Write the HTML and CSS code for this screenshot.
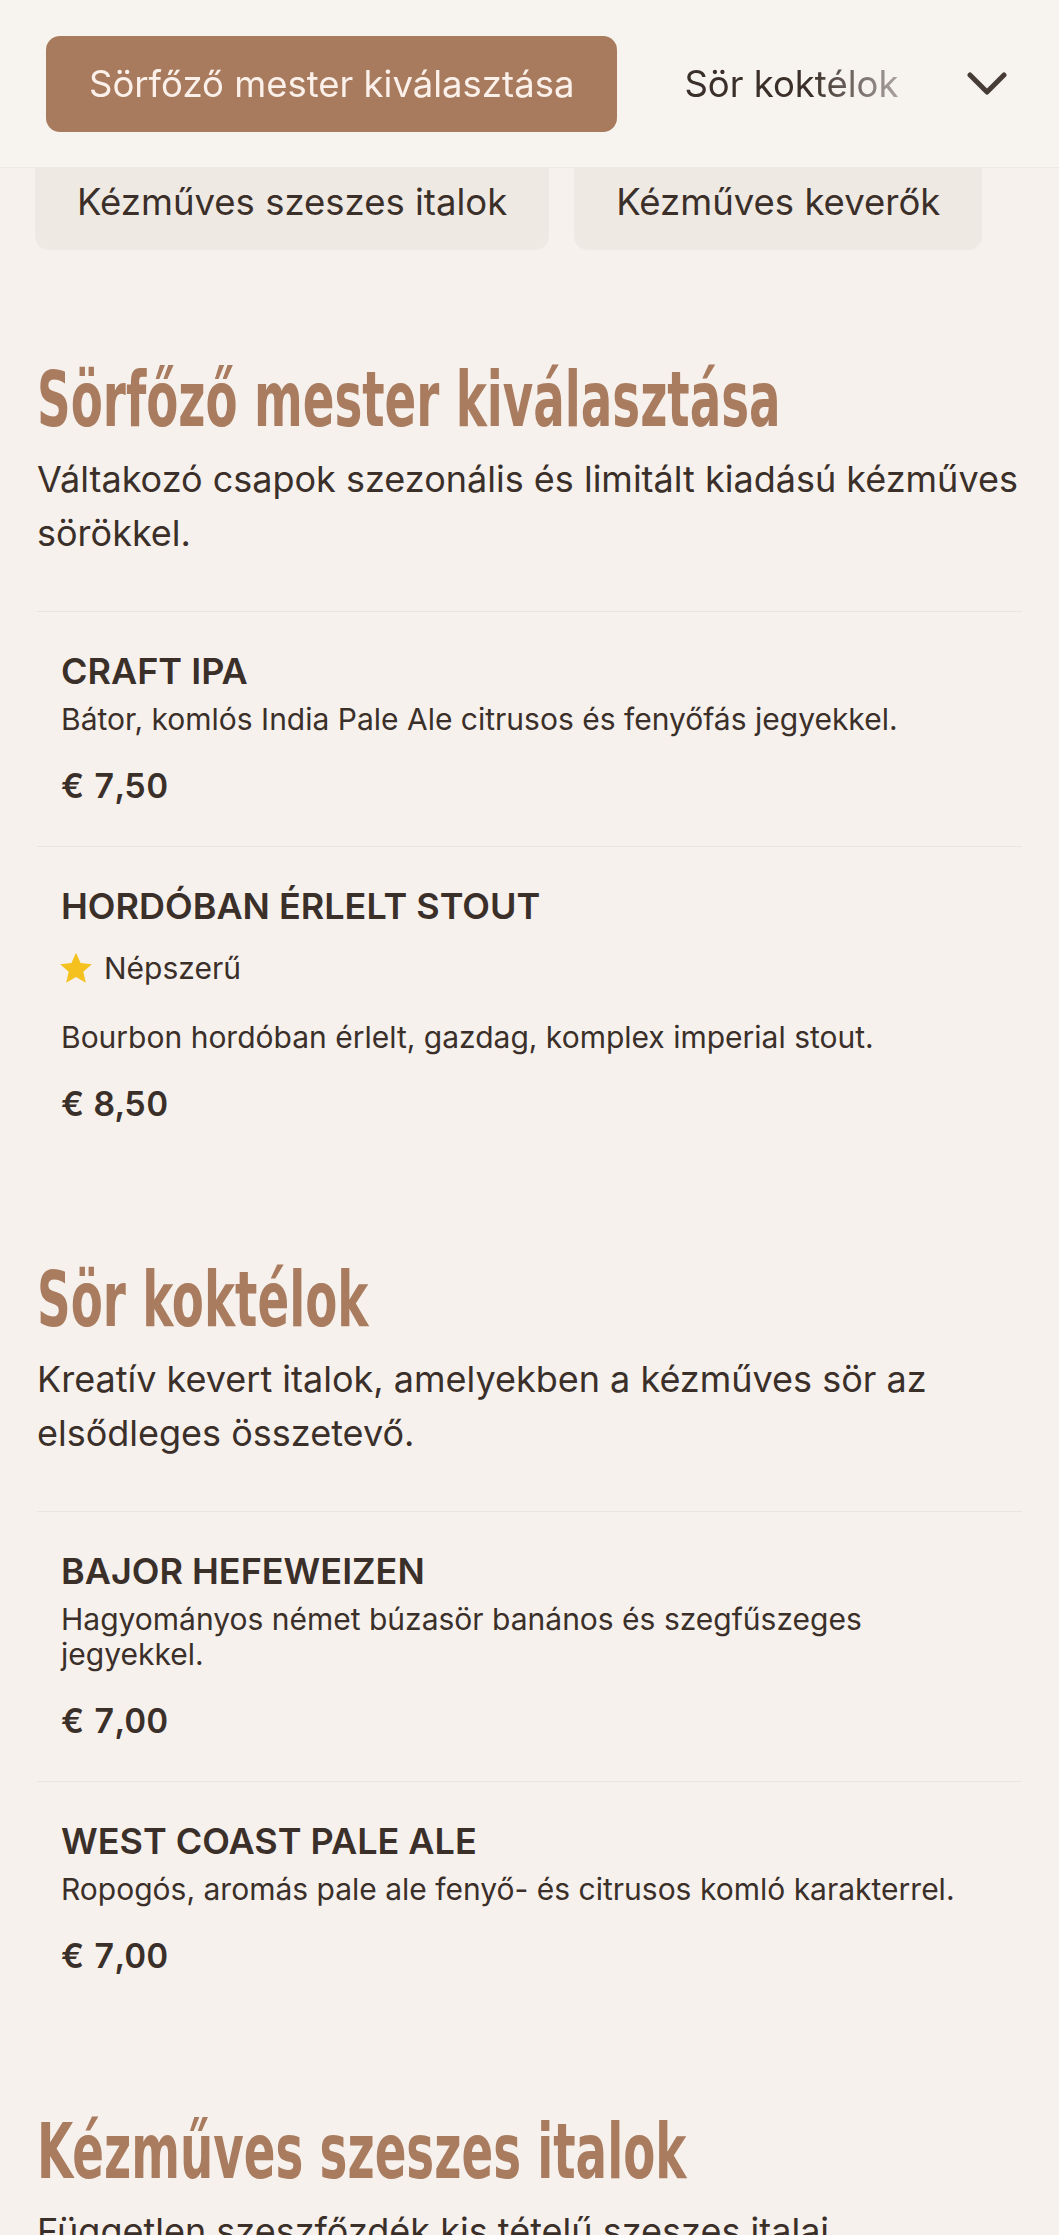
FILE: index.html
```html
<!DOCTYPE html>
<html lang="hu">
<head>
<meta charset="utf-8">
<title>Itallap</title>
<link rel="stylesheet" href="styles.css">
</head>
<body>
<header class="topbar">
  <div class="tabs">
    <a class="tab tab-active">Sörfőző mester kiválasztása</a>
    <a class="tab">Sör koktélok</a>
  </div>
  <button class="toggle" aria-label="Kategóriák">
    <svg class="chevron" viewBox="0 0 40 24" width="40" height="24"><polyline points="3,3 20,20 37,3" fill="none" stroke="currentColor" stroke-width="5" stroke-linecap="round" stroke-linejoin="round"/></svg>
  </button>
</header>
<nav class="chips">
  <a class="chip">Kézműves szeszes italok</a>
  <a class="chip">Kézműves keverők</a>
</nav>
<main class="menu">
  <section class="menu-section">
    <h2 class="section-title">Sörfőző mester kiválasztása</h2>
    <p class="section-desc">Váltakozó csapok szezonális és limitált kiadású kézműves sörökkel.</p>
    <ul class="items">
      <li class="item">
        <h3 class="item-name">CRAFT IPA</h3>
        <p class="item-desc">Bátor, komlós India Pale Ale citrusos és fenyőfás jegyekkel.</p>
        <p class="item-price">€ 7,50</p>
      </li>
      <li class="item">
        <h3 class="item-name">HORDÓBAN ÉRLELT STOUT</h3>
        <div class="badge">
          <svg class="star" viewBox="0 0 24 24" width="36" height="36"><path d="M12 1.8l3.05 6.9 7.5.72-5.66 5 1.66 7.38L12 17.97l-6.55 3.83 1.66-7.38-5.66-5 7.5-.72z" fill="#f4c11e"/></svg>
          <span>Népszerű</span>
        </div>
        <p class="item-desc">Bourbon hordóban érlelt, gazdag, komplex imperial stout.</p>
        <p class="item-price">€ 8,50</p>
      </li>
    </ul>
  </section>
  <section class="menu-section">
    <h2 class="section-title">Sör koktélok</h2>
    <p class="section-desc">Kreatív kevert italok, amelyekben a kézműves sör az elsődleges összetevő.</p>
    <ul class="items">
      <li class="item">
        <h3 class="item-name">BAJOR HEFEWEIZEN</h3>
        <p class="item-desc">Hagyományos német búzasör banános és szegfűszeges jegyekkel.</p>
        <p class="item-price">€ 7,00</p>
      </li>
      <li class="item">
        <h3 class="item-name">WEST COAST PALE ALE</h3>
        <p class="item-desc">Ropogós, aromás pale ale fenyő- és citrusos komló karakterrel.</p>
        <p class="item-price">€ 7,00</p>
      </li>
    </ul>
  </section>
  <section class="menu-section">
    <h2 class="section-title">Kézműves szeszes italok</h2>
    <p class="section-desc">Független szeszfőzdék kis tételű szeszes italai.</p>
  </section>
</main>
</body>
</html>
```

FILE: styles.css
```css
* { box-sizing: border-box; }

body {
  margin: 0;
  background: #f6f1ed;
  color: #3b2f29;
  font-family: Inter, "Noto Sans", sans-serif;
}

.topbar {
  position: sticky;
  top: 0;
  z-index: 2;
  height: 168px;
  display: flex;
  align-items: center;
  padding-left: 46px;
  background: #f7f3ef;
  border-bottom: 1px solid #eee8e3;
}

.tabs {
  flex: 1;
  display: flex;
  gap: 24px;
  overflow: hidden;
  -webkit-mask-image: linear-gradient(to right, #000 calc(100% - 120px), rgba(0,0,0,0.2));
  mask-image: linear-gradient(to right, #000 calc(100% - 120px), rgba(0,0,0,0.2));
}

.tab,
.chip {
  flex-shrink: 0;
  display: flex;
  align-items: center;
  height: 96px;
  padding: 0 43px;
  border-radius: 14px;
  font-size: 36.5px;
  white-space: nowrap;
  color: #3b2f29;
}

.tab-active {
  background: #a87b5e;
  color: #fbf1ea;
}

.toggle {
  flex-shrink: 0;
  width: 80px;
  height: 80px;
  margin: 0 32px 0 17px;
  padding: 0;
  border: 0;
  background: none;
  color: #463b35;
  display: flex;
  align-items: center;
  justify-content: center;
}

.chips {
  display: flex;
  gap: 25px;
  padding: 0 35px;
  margin-top: -14px;
}

.chip {
  padding: 0 42px;
  background: #efe9e4;
}

.menu {
  padding: 110px 37px 0;
}

.menu-section + .menu-section {
  margin-top: 96px;
}

.section-title {
  margin: 0;
  font-family: "DejaVu Sans Condensed", "DejaVu Sans", sans-serif;
  font-stretch: condensed;
  font-weight: 700;
  font-size: 77px;
  line-height: 80px;
  color: #a97c5f;
  white-space: nowrap;
  transform: scaleX(0.675);
  transform-origin: left center;
}

.section-desc {
  margin: 12px 0 51px;
  font-size: 36px;
  line-height: 54px;
}

.items {
  list-style: none;
  margin: 0;
  padding: 0;
}

.item {
  display: flex;
  flex-direction: column;
  border-top: 1px solid #ebe5df;
  padding: 38px 24px 40px;
}

.item-name {
  margin: 0;
  font-size: 36px;
  line-height: 42px;
  font-weight: 600;
}

.item-desc {
  margin: 10px 0 0;
  font-size: 30px;
  line-height: 35px;
}

.item-price {
  margin: 29px 0 0;
  font-size: 34px;
  line-height: 40px;
  font-weight: 600;
  font-variant-numeric: tabular-nums;
}

.badge {
  display: flex;
  align-items: center;
  gap: 10px;
  margin: 24px 0 24px;
  font-size: 30px;
  line-height: 35px;
}

.star {
  display: block;
  margin-left: -3px;
  margin-top: -2px;
}
```
